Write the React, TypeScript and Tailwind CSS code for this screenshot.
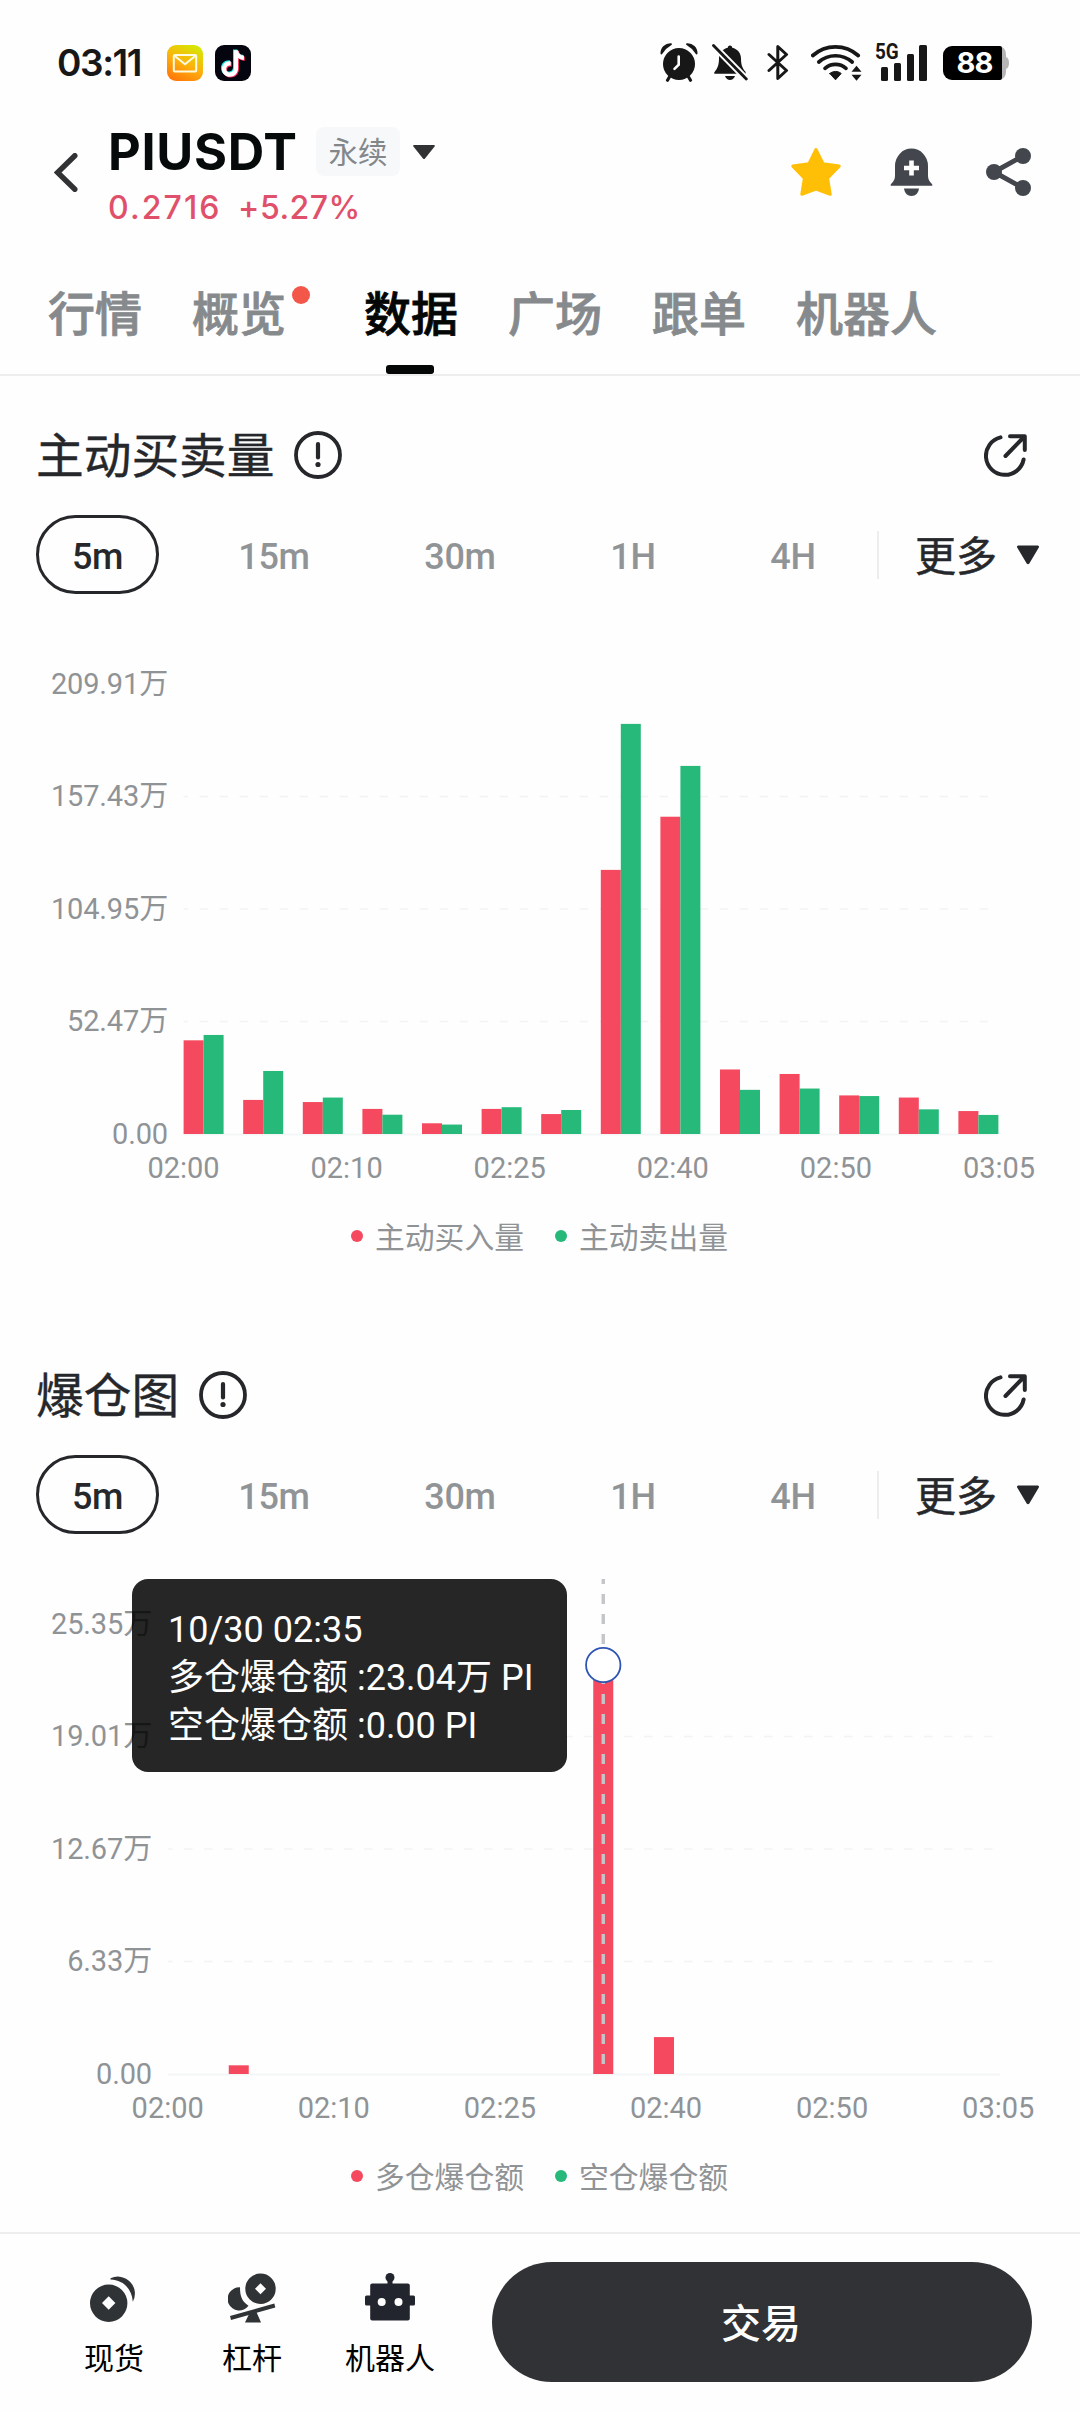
import React from "react";

const ROBOTO = "font-['Roboto','Noto_Sans_CJK_SC',sans-serif]";
const CJK = "font-['Noto_Sans_CJK_SC',sans-serif]";
const INTER = "font-['Inter','Noto_Sans_CJK_SC',sans-serif]";

const RED = "#f4495e";
const GREEN = "#26b97a";

/* ---------- status bar ---------- */

function MailIcon() {
  return (
    <svg width="36" height="36" viewBox="0 0 36 36">
      <defs>
        <linearGradient id="mail" x1="0.3" y1="1" x2="0.8" y2="0">
          <stop offset="0" stopColor="#ff7a0a" />
          <stop offset="0.45" stopColor="#fdb00c" />
          <stop offset="1" stopColor="#d3ea04" />
        </linearGradient>
      </defs>
      <rect width="36" height="36" rx="9" fill="url(#mail)" />
      <rect x="6.8" y="10" width="22.4" height="16.4" rx="1" fill="none" stroke="#fffbe0" strokeWidth="2" />
      <path d="M7.5 10.8 18 19.3 28.500 10.800" fill="none" stroke="#fffbe0" strokeWidth="2" />
    </svg>
  );
}

function NoteIcon() {
  const d = "M18.600 5.200h4.200c.3 3.300 2.400 5.200 5.800 5.400v4.300c-2.300 0-4.200-.7-5.800-1.800v10.200c0 5.300-3.800 8.500-8.200 8.500-4.600 0-8-3.500-8-7.900 0-4.700 3.800-8.100 8.900-7.700v4.500c-2.600-.5-4.600 1-4.600 3.200 0 2 1.600 3.500 3.600 3.500 2.300 0 4.100-1.500 4.100-4.300z";
  return (
    <svg width="36" height="36" viewBox="0 0 36 36">
      <rect width="36" height="36" rx="9" fill="#05050f" />
      <path d={d} fill="#25e5e5" transform="translate(-.6 -.8)" />
      <path d={d} fill="#f52a5b" transform="translate(1.200 .8)" />
      <path d={d} fill="#fff" transform="translate(.3 0)" />
    </svg>
  );
}

function AlarmIcon() {
  return (
    <svg width="38" height="39" viewBox="0 0 38 39">
      <circle cx="19" cy="21" r="16" fill="#171717" />
      <path d="M1.400 10.500A9 9 0 0 1 11 1.200a26 26 0 0 0-9.600 9.300zM36.600 10.500A9 9 0 0 0 27 1.200a26 26 0 0 1 9.600 9.300z" fill="#171717" stroke="#171717" strokeWidth="1.800" strokeLinejoin="round" />
      <path d="m10 33-2.500 4.200M28 33l2.500 4.200" stroke="#171717" strokeWidth="3.200" strokeLinecap="round" />
      <path d="M18.700 13.500v8.200l-4.200 4.200" fill="none" stroke="#fff" strokeWidth="2.600" strokeLinecap="round" />
    </svg>
  );
}

function BellOffIcon() {
  return (
    <svg width="36" height="37" viewBox="0 0 36 37">
      <path d="M18 1.500c1.500 0 2.200 1 2.200 2.200 5.300 1.100 8.800 5.300 8.800 10.800 0 7.500 2 10.300 4.500 13.300l.3 2H2.500c-.6-1-.2-1.600.6-2.600 2-2.500 3.900-5.700 3.900-12.700 0-5.500 3.500-9.700 8.800-10.800 0-1.200.7-2.200 2.200-2.200z" fill="#171717" />
      <path d="M13 32h10c-1 2.800-2.800 3.900-5 3.900s-4-1.100-5-3.900z" fill="#171717" />
      <path d="M1.500 1.500 34.300 35" stroke="#fefefe" strokeWidth="6.600" />
      <path d="M1.500 1.500 34.300 35" stroke="#171717" strokeWidth="2.800" strokeLinecap="round" />
    </svg>
  );
}

function BluetoothIcon() {
  return (
    <svg width="22" height="37" viewBox="0 0 22 37" fill="none" stroke="#171717" strokeWidth="3" strokeLinejoin="round" strokeLinecap="round">
      <path d="M2 10.500 19.500 26.500 10.800 34.500V2.500l8.700 8L2 26.500" />
    </svg>
  );
}

function WifiIcon() {
  return (
    <svg width="52" height="37" viewBox="0 0 52 37" fill="none" stroke="#171717" strokeLinecap="round">
      <path d="M1.800 11.500a34 34 0 0 1 45.400 0" strokeWidth="3.700" />
      <path d="M7.800 18a25.500 25.500 0 0 1 33.400 0" strokeWidth="3.700" />
      <path d="M14 24.300a16 16 0 0 1 21 0" strokeWidth="3.700" />
      <path d="m18.800 29.500 5.700 6.300 5.700-6.300c-3.200-2.800-8.200-2.800-11.400 0z" fill="#171717" strokeWidth="1" strokeLinejoin="round" />
      <path d="m40.500 27.800 5-6 5 6zM40.500 30.800l5 6 5-6z" fill="#171717" stroke="none" />
    </svg>
  );
}

function StatusBar() {
  return (
    <div className="flex h-[122px] items-center pt-[3px] pr-[71px] pl-[57px]">
      <span className={`${INTER} w-[110px] text-[37px] font-semibold tracking-[-1.400px] text-[#171717]`}>03:11</span>
      <div className="flex gap-3">
        <MailIcon />
        <NoteIcon />
      </div>
      <div className="ml-auto flex items-center">
        <AlarmIcon />
        <span className="ml-[14px]"><BellOffIcon /></span>
        <span className="ml-[19px]"><BluetoothIcon /></span>
        <span className="ml-[22px]"><WifiIcon /></span>
        <div className="relative ml-[12px] h-[37px] w-[53px]">
          <span className="absolute -top-[1px] left-0 origin-left scale-x-[.86] font-['Roboto',sans-serif] text-[22px] leading-[18px] font-bold text-[#171717]">5G</span>
          <div className="flex h-full items-end gap-[5.400px] pl-[6px]">
            <i className="h-[14px] w-[7.400px] rounded-[1.500px] bg-[#171717]" />
            <i className="h-[18px] w-[7.400px] rounded-[1.500px] bg-[#171717]" />
            <i className="h-[27px] w-[7.400px] rounded-[1.500px] bg-[#171717]" />
            <i className="h-[36px] w-[7.400px] rounded-[1.500px] bg-[#171717]" />
          </div>
        </div>
        <div className="ml-[15px] flex items-center">
          <div className={`${INTER} flex h-[34px] w-[59px] items-center justify-center rounded-l-[9px] rounded-r-[2px] bg-black pl-[4px] text-[29px] font-bold tracking-[-0.800px] text-white`}>
            88
          </div>
          <svg width="7" height="34" viewBox="0 0 7 34">
            <path d="M0 1q4 2 4 8v2q3 1 3 6t-3 6v2q0 6-4 8z" fill="#b5b5b5" />
          </svg>
        </div>
      </div>
    </div>
  );
}

/* ---------- header ---------- */

function Header() {
  return (
    <header className="flex h-[108px] items-start pr-[48px] pl-[54px]">
      <svg className="mt-[31px]" width="25" height="39" viewBox="0 0 25 39" fill="none">
        <path d="M20.800 2.700 3.600 19.500l17.200 16.800" stroke="#303234" strokeWidth="5.400" strokeLinecap="round" strokeLinejoin="miter" />
      </svg>
      <div className="ml-[29px]">
        <div className="mt-[5px] flex h-[49px] items-center">
          <h1 className={`${INTER} w-[208px] text-[50.500px] font-bold tracking-[0.700px] text-[#070a0a]`}>PIUSDT</h1>
          <span className={`${CJK} flex h-[49px] w-[84px] items-center justify-center rounded-lg bg-[#f6f8fa] pb-[3px] text-[29.500px] text-[#84878a]`}>
            永续
          </span>
          <svg className="ml-3" width="24" height="16" viewBox="0 0 24 16">
            <path d="M2 1h20q1.500.2.600 1.600L13 14.600q-1 1-2 0L1.400 2.600Q.5 1.200 2 1z" fill="#303234" />
          </svg>
        </div>
        <p className={`${INTER} mt-[8px] text-[32px] leading-[48px] font-medium tracking-[2.100px] whitespace-pre text-[#e0506a]`}>
          0.2716<span className="ml-[16.500px] tracking-[0.500px]">+5.27%</span>
        </p>
      </div>
      <div className="mt-[26px] ml-auto flex items-center gap-[50px]">
        <svg className="-mr-[1px]" width="50" height="48" viewBox="0 0 50 48">
          <path d="m25 1.500 7.200 14.300 16 2.300-11.600 12 2.600 16.200L25 41.200l-14.200 5.100 2.600-16.200L1.800 18.100l16-2.300z" fill="#ffbf06" stroke="#ffbf06" strokeWidth="3" strokeLinejoin="round" />
        </svg>
        <svg width="43" height="48" viewBox="0 0 43 48" fill="#43464d">
          <path d="M5 18a16.500 17.500 0 0 1 33 0v10c0 3.500 1.600 5.500 3.500 7.500 1 1.200 1.200 2.300.5 2.300H1c-.7 0-.5-1.100.5-2.300C3.400 33.500 5 31.500 5 28z" />
          <path d="M14 40.500h15c-.5 4.500-3.400 7.500-7.500 7.500s-7-3-7.500-7.500z" />
          <path d="M21.500 12.500v15M14 20h15" stroke="#fff" strokeWidth="4.600" />
        </svg>
        <svg className="mr-[1px] ml-[3px]" width="45" height="48" viewBox="0 0 45 48">
          <g fill="#43464d">
            <circle cx="8" cy="24" r="8" />
            <circle cx="37" cy="8" r="8" />
            <circle cx="37" cy="40" r="8" />
          </g>
          <path d="M37 8 8 24l29 16" fill="none" stroke="#43464d" strokeWidth="5" />
        </svg>
      </div>
    </header>
  );
}

function Tabs() {
  const tabs = ["行情", "概览", "数据", "广场", "跟单", "机器人"];
  return (
    <nav className={`${CJK} flex h-[146px] border-b-2 border-[#eeeeef] pl-[48px] text-[47px] font-medium [-webkit-text-stroke:0.800px]`}>
      {tabs.map((t) => {
        const active = t === "数据";
        return (
          <div
            key={t}
            className={
              "relative flex h-full shrink-0 items-center justify-center pb-[28px] " +
              (t === "概览" ? "mr-[78px] " : "mr-[50px] ") +
              (active ? "text-[#050606]" : "text-[#868a8d]")
            }
          >
            <span className="mt-[45px] leading-[48px]">{t}</span>
            {t === "概览" && <i className="absolute top-[56px] -right-[24px] size-[18px] rounded-full bg-[#f2574a]" />}
            {active && <i className="absolute bottom-0 left-[22px] h-[9px] w-[48px] rounded-[3px] bg-[#050606]" />}
          </div>
        );
      })}
    </nav>
  );
}

/* ---------- charts ---------- */

function InfoIcon() {
  return (
    <svg width="48" height="48" viewBox="0 0 48 48" fill="none">
      <circle cx="24" cy="24" r="22" stroke="#25272b" strokeWidth="3.800" />
      <path d="M24 13v13.500" stroke="#25272b" strokeWidth="4.200" strokeLinecap="round" />
      <circle cx="24" cy="33.500" r="2.600" fill="#25272b" />
    </svg>
  );
}

function ShareOutIcon() {
  return (
    <svg width="43" height="43" viewBox="0 0 43 43" fill="none" stroke="#25272b" strokeWidth="4" strokeLinecap="round" strokeLinejoin="round">
      <path d="M16.500 3.400A19 19 0 1 0 39.600 25.500" />
      <path d="M21.500 22 40 3M26 2.300h14.800V16" />
    </svg>
  );
}

function ChartHeading({ title }: { title: string }) {
  return (
    <div className="flex h-[48px] items-center pr-[53px] pl-[36px]">
      <h2 className={`${CJK} pb-[4px] text-[47.700px] leading-[48px] text-[#25272b] [-webkit-text-stroke:0.400px]`}>{title}</h2>
      <span className="ml-[20px]"><InfoIcon /></span>
      <span className="ml-auto"><ShareOutIcon /></span>
    </div>
  );
}

function Periods() {
  return (
    <div className={`${ROBOTO} mt-[36px] flex h-[79px] items-center pl-[36px] text-[36px] font-medium tracking-[-0.300px] text-[#919497]`}>
      <div className="flex items-center gap-[42px]">
        <span className="flex h-[79px] w-[123px] items-center justify-center rounded-full border-[3px] border-[#25272b] pt-[4px] text-[#25272b]">5m</span>
        <span className="w-[145px] pt-[4px] pl-[1px] text-center">15m</span>
        <span className="w-[144px] pt-[4px] text-center">30m</span>
        <span className="w-[118px] pt-[4px] text-center">1H</span>
        <span className="w-[118px] pt-[4px] text-center">4H</span>
      </div>
      <i className="ml-[25px] h-[48px] w-[2px] bg-[#ecedef]" />
      <span className={`${CJK} ml-[36px] pb-[3px] text-[41px] leading-[48px] font-normal tracking-normal text-[#25272b] [-webkit-text-stroke:0.500px]`}>更多</span>
      <svg className="ml-[19px]" width="24" height="20" viewBox="0 0 24 20">
        <path d="M2 .5h20q1.600.3.800 2L13.300 18.600q-1.300 1.400-2.600 0L1.200 2.500q-.8-1.700.8-2z" fill="#25272b" />
      </svg>
    </div>
  );
}

type ChartProps = {
  left: number;
  right: number;
  labelEnd: number;
  step: number;
  firstTime: number;
  timeStep: number;
  max: number;
  ticks: string[];
  data: [number, number][];
  gridPhase: number;
  cursor?: number;
};

const BASE = 540;
const PLOT = 450;
const TIMES = ["02:00", "02:10", "02:25", "02:40", "02:50", "03:05"];

function BarChart({ left, right, labelEnd, step, firstTime, timeStep, max, ticks, data, gridPhase, cursor }: ChartProps) {
  const h = (v: number) => (v / max) * PLOT;
  const cx = cursor === undefined ? 0 : left + cursor * step + 10;
  return (
    <svg className="block" width="1080" height="602" viewBox="0 0 1080 602" fontFamily="Roboto, 'Noto Sans CJK SC', sans-serif" fontSize="29">
      {[1, 2, 3].map((i) => (
        <path key={i} d={`M${left} ${BASE - i * 112.5}H${right - 6}`} stroke="#f2f3f4" strokeWidth="1.600" strokeDasharray="8.600 11.400" strokeDashoffset={gridPhase} />
      ))}
      <path d={`M${left} ${BASE + 0.5}H${right}`} stroke="#f4f5f6" strokeWidth="2" />
      {data.map(([a, b], i) => (
        <g key={i}>
          <rect x={left + i * step} y={BASE - h(a)} width="20" height={h(a)} fill={RED} />
          <rect x={left + i * step + 20} y={BASE - h(b)} width="20" height={h(b)} fill={GREEN} />
        </g>
      ))}
      {ticks.map((t, i) => (
        <text key={t} x={labelEnd} y={BASE - i * 112.5 + 9.5} textAnchor="end" letterSpacing="-0.150" fill="#909396">{t}</text>
      ))}
      {TIMES.map((t, i) => (
        <text key={t} x={firstTime + i * timeStep} y="584" textAnchor="middle" fill="#909396">{t}</text>
      ))}
      {cursor !== undefined && (
        <g>
          <path d={`M${cx} 45V540`} stroke="#c3c5c9" strokeWidth="3.400" strokeDasharray="10 10" strokeDashoffset="5" />
          <circle cx={cx} cy={BASE - h(data[cursor][0])} r="17.200" fill="#fff" stroke="#2f55b4" strokeWidth="1.800" />
        </g>
      )}
    </svg>
  );
}

function Legend({ items }: { items: [string, string] }) {
  return (
    <div className={`${CJK} flex h-[80px] items-center pl-[351px] text-[29.800px] text-[#909396]`}>
      <i className="size-3 rounded-full bg-[#f4495e]" />
      <span className="ml-3 w-[150px] pb-[3px] leading-[30px]">{items[0]}</span>
      <i className="ml-[30px] size-3 rounded-full bg-[#26b97a]" />
      <span className="ml-3 pb-[3px] leading-[30px]">{items[1]}</span>
    </div>
  );
}

const VOLUME: [number, number][] = [
  [43.7, 46.2], [15.9, 29.4], [14.9, 17], [11.7, 9], [5, 4.4], [11.7, 12.5], [9.3, 11.2],
  [123.2, 191.3], [148, 171.7], [30.1, 20.6], [28, 21.2], [18, 17.7], [17, 11.5], [10.7, 8.9],
];

const LIQUIDATION: [number, number][] = [
  [0, 0], [0.49, 0], [0, 0], [0, 0], [0, 0], [0, 0], [0, 0],
  [23.04, 0], [2.08, 0], [0, 0], [0, 0], [0, 0], [0, 0], [0, 0],
];

function Tooltip() {
  return (
    <div className={`${ROBOTO} absolute top-[45px] left-[132px] h-[193px] w-[435px] rounded-2xl bg-black/85 pt-[27px] pl-[36px] text-[36px] leading-[48px] whitespace-nowrap text-white`}>
      <p>10/30 02:35</p>
      <p>多仓爆仓额 :23.04万 PI</p>
      <p>空仓爆仓额 :0.00 PI</p>
    </div>
  );
}

/* ---------- bottom bar ---------- */

function CoinsIcon() {
  return (
    <svg width="48" height="50" viewBox="0 0 48 50" fill="#303336">
      <path fillRule="evenodd" d="M18.700 11.500a18.700 18.700 0 1 1 0 37.400 18.700 18.700 0 0 1 0-37.400zm0 11.700L12 30l6.700 6.700 6.700-6.700z" />
      <path d="M20.500 5.300a17 17 0 0 1 22.300 23.500C42 15.500 33 7 20.500 6.500z" />
    </svg>
  );
}

function LeverIcon() {
  return (
    <svg width="48" height="50" viewBox="0 0 48 50" fill="#303336">
      <path fillRule="evenodd" d="M32.500.5a15.200 15.200 0 1 1 0 30.400 15.200 15.200 0 0 1 0-30.400zm0 9.800-5.500 5.500 5.500 5.500 5.500-5.500z" />
      <path d="M12 14.300C12 23.500 14 28.500 20.500 32.800A11.600 11.600 0 1 1 12 14.300z" />
      <path d="M2 43 46.300 30.500l1 4L3 47z" />
      <path d="m22.500 38-5.500 11.500h16L28 38z" />
    </svg>
  );
}

function RobotIcon() {
  return (
    <svg width="50" height="48" viewBox="0 0 50 48">
      <g fill="#22242e">
        <circle cx="25" cy="4.500" r="4.500" />
        <path d="M22.500 6h5v6h-5z" />
        <rect x="5.200" y="10.500" width="39.600" height="37" rx="2" />
        <rect x="0" y="22.500" width="50" height="10" rx="1.500" />
      </g>
      <circle cx="16.700" cy="29" r="4" fill="#fff" />
      <circle cx="33.500" cy="29" r="4" fill="#fff" />
    </svg>
  );
}

function BottomBar() {
  const items: [string, React.ReactNode][] = [
    ["现货", <CoinsIcon />],
    ["杠杆", <LeverIcon />],
    ["机器人", <RobotIcon />],
  ];
  return (
    <footer className={`${CJK} flex h-[180px] border-t-2 border-[#eeeeef] pl-[45px]`}>
      {items.map(([label, icon]) => (
        <div key={label} className="flex w-[138px] flex-col items-center pt-[39px]">
          <span className="h-[68px]">{icon}</span>
          <span className="text-[30px] leading-[30px] text-black">{label}</span>
        </div>
      ))}
      <button className="mt-[28px] ml-[33px] flex h-[120px] w-[540px] items-center justify-center rounded-full bg-[#313235] pr-[2px] pb-[3px] text-[40px] font-medium text-white">
        交易
      </button>
    </footer>
  );
}

export default function App() {
  return (
    <div className="flex h-[2412px] w-[1080px] flex-col overflow-hidden bg-[#fefefe]">
      <StatusBar />
      <Header />
      <Tabs />
      <section className="h-[940px] pt-[55px]">
        <ChartHeading title="主动买卖量" />
        <Periods />
        <BarChart
          left={183.6} right={998} labelEnd={168} step={59.6} firstTime={183.5} timeStep={163.1}
          max={209.91} ticks={["0.00", "52.47万", "104.95万", "157.43万", "209.91万"]}
          data={VOLUME} gridPhase={4}
        />
        <Legend items={["主动买入量", "主动卖出量"]} />
      </section>
      <section className="h-[916px] pt-[55px]">
        <ChartHeading title="爆仓图" />
        <Periods />
        <div className="relative">
          <BarChart
            left={168} right={1000} labelEnd={152} step={60.75} firstTime={167.7} timeStep={166.1}
            max={25.35} ticks={["0.00", "6.33万", "12.67万", "19.01万", "25.35万"]}
            data={LIQUIDATION} gridPhase={4} cursor={7}
          />
          <Tooltip />
        </div>
        <Legend items={["多仓爆仓额", "空仓爆仓额"]} />
      </section>
      <BottomBar />
    </div>
  );
}
